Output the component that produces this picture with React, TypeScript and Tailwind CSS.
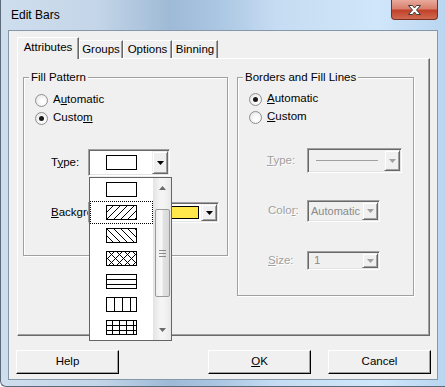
import type { ReactNode } from 'react';

type Pattern = 'empty' | 'fwd' | 'back' | 'cross' | 'hlines' | 'vlines' | 'grid';

function PatternSwatch({ kind }: { kind: Pattern }) {
  const w = 30;
  const h = 14;
  const lines: ReactNode[] = [];
  if (kind === 'fwd' || kind === 'cross') {
    for (let x = -14; x < w + 14; x += kind === 'cross' ? 8 : 7) {
      lines.push(<line key={'f' + x} x1={x} y1={h} x2={x + h} y2={0} stroke="#000" strokeWidth={1} />);
    }
  }
  if (kind === 'back' || kind === 'cross') {
    for (let x = -14; x < w + 14; x += kind === 'cross' ? 8 : 7) {
      lines.push(<line key={'b' + x} x1={x} y1={0} x2={x + h} y2={h} stroke="#000" strokeWidth={1} />);
    }
  }
  if (kind === 'hlines' || kind === 'grid') {
    [4.5, 9.5].forEach((y) => lines.push(<line key={'h' + y} x1={0} y1={y} x2={w} y2={y} stroke="#000" />));
  }
  if (kind === 'vlines') {
    [7.5, 15.5, 23.5].forEach((x) => lines.push(<line key={'v' + x} x1={x} y1={0} x2={x} y2={h} stroke="#000" />));
  }
  if (kind === 'grid') {
    [5.5, 12.5, 19.5, 26.5].forEach((x) => lines.push(<line key={'g' + x} x1={x} y1={0} x2={x} y2={h} stroke="#000" />));
  }
  return (
    <svg width={w + 1} height={h + 1} viewBox={`-0.5 -0.5 ${w + 1} ${h + 1}`}>
      <defs>
        <clipPath id={'clip-' + kind}>
          <rect x={0} y={0} width={w} height={h} />
        </clipPath>
      </defs>
      <rect x={0} y={0} width={w} height={h} fill="#fff" />
      <g clipPath={`url(#clip-${kind})`} shapeRendering={kind === 'fwd' || kind === 'back' || kind === 'cross' ? 'auto' : 'crispEdges'}>
        {lines}
      </g>
      <rect x={0} y={0} width={w} height={h} fill="none" stroke="#000" shapeRendering="crispEdges" />
    </svg>
  );
}

function Radio({ checked, children }: { checked?: boolean; children: ReactNode }) {
  return (
    <div className="flex items-center h-[18px] gap-[5px]">
      <span className="w-[13px] h-[13px] rounded-full border border-[#8e8f8f] bg-[radial-gradient(circle_at_60%_60%,#ffffff_20%,#e6e6e6_80%)] flex items-center justify-center">
        {checked && <span className="w-[5px] h-[5px] rounded-full bg-[#1b1b1b]" />}
      </span>
      <span>{children}</span>
    </div>
  );
}

function Arrow({ disabled }: { disabled?: boolean }) {
  return (
    <svg width="7" height="4" viewBox="0 0 7 4">
      <path d="M0 0h7L3.5 4z" fill={disabled ? '#a0a0a0' : '#000'} />
    </svg>
  );
}

function DropButton({ disabled }: { disabled?: boolean }) {
  return (
    <div className="w-[16px] h-full flex items-center justify-center bg-[#f0f0f0] border border-t-[#f0f0f0] border-l-[#f0f0f0] border-r-[#696969] border-b-[#696969] shadow-[inset_1px_1px_0_#fff,inset_-1px_-1px_0_#a0a0a0]">
      <Arrow disabled={disabled} />
    </div>
  );
}

function Combo({ className, disabled, children }: { className: string; disabled?: boolean; children?: ReactNode }) {
  return (
    <div
      className={`flex border border-t-[#a0a0a0] border-l-[#a0a0a0] border-r-white border-b-white shadow-[inset_1px_1px_0_#696969,inset_-1px_-1px_0_#e3e3e3] p-[1px] ${
        disabled ? 'bg-[#f0f0f0]' : 'bg-white'
      } ${className}`}
    >
      <div className="flex-1 flex items-center min-w-0 overflow-hidden whitespace-nowrap">{children}</div>
      <DropButton disabled={disabled} />
    </div>
  );
}

function Button({ children, className }: { children: ReactNode; className?: string }) {
  return (
    <div
      className={`h-[24px] flex items-center justify-center bg-[#f0f0f0] border border-t-white border-l-white border-r-[#000] border-b-[#000] shadow-[inset_-1px_-1px_0_#a0a0a0] ${className ?? ''}`}
    >
      {children}
    </div>
  );
}

export default function App() {
  const tabs = [
    { label: 'Groups', w: 'w-[44px]' },
    { label: 'Options', w: 'w-[49px]' },
    { label: 'Binning', w: 'w-[46px]' },
  ];
  const patterns: Pattern[] = ['empty', 'fwd', 'back', 'cross', 'hlines', 'vlines', 'grid'];

  return (
    <div className="relative w-[445px] h-[387px] overflow-hidden font-['Liberation_Sans',Arial,sans-serif] text-[11px] text-black bg-[linear-gradient(90deg,#cfdeed_0%,#c3d5e8_22%,#9fbad6_38%,#a9c5e1_48%,#c6dcf2_62%,#d0e6fa_85%,#b9d6f0_100%)] border-l border-b border-[#5b6a7a] rounded-bl-[6px] flex flex-col">
      {/* title bar */}
      <div className="h-[30px] flex items-center pl-[10px] pb-[1px] text-[12px]">Edit Bars</div>
      <div className="absolute right-[7px] top-0 w-[47px] h-[20px] rounded-b-[4px] border border-t-0 border-[#7a2f22] bg-[linear-gradient(180deg,#e9aa9c_0%,#d8806c_45%,#c1412a_55%,#cf6a50_100%)] flex items-center justify-center">
        <svg width="15" height="12" viewBox="0 0 15 12">
          <path d="M1.5 1.5h4l2 2.5 2-2.5h4l-4 4.5 4 4.5h-4l-2-2.5-2 2.5h-4l4-4.5z" fill="#fff" stroke="#3b3b3b" strokeWidth="1" strokeLinejoin="round" />
        </svg>
      </div>

      {/* client area */}
      <div className="ml-[7px] mr-[7px] h-[350px] border border-[#8597ab] bg-[#f0f0f0] flex flex-col">
        <div className="ml-[8px] mt-[6px] w-[413px]">
          {/* tabs */}
          <div className="flex items-end h-[21px] text-[11.5px]">
            <div className="relative z-10 w-[62px] h-[22px] -mb-px bg-[#f0f0f0] border border-b-0 border-t-white border-l-white border-r-[#696969] shadow-[inset_-1px_0_0_#a0a0a0] flex items-center justify-center pb-[2px]">
              Attributes
            </div>
            {tabs.map((t) => (
              <div
                key={t.label}
                className={`${t.w} h-[18px] border border-b-0 border-t-white border-l-white border-r-[#696969] shadow-[inset_-1px_0_0_#a0a0a0] flex items-center justify-center`}
              >
                {t.label}
              </div>
            ))}
          </div>
          {/* panel */}
          <div className="h-[278px] border border-t-white border-l-white border-r-[#696969] border-b-[#696969] shadow-[inset_-1px_-1px_0_#a0a0a0] flex items-start text-[11.5px]">
            {/* Fill Pattern */}
            <div className="relative ml-[5px] mt-[18px] w-[205px] h-[179px] border border-[#a0a0a0] shadow-[inset_1px_1px_0_#fff,1px_1px_0_#fff]">
              <span className="absolute -top-[8px] left-[5px] px-[2px] bg-[#f0f0f0] leading-[14px]">Fill Pattern</span>
              <div className="pl-[11px] pt-[13px]">
                <Radio>
                  A<span className="underline">u</span>tomatic
                </Radio>
                <Radio checked>
                  Custo<span className="underline">m</span>
                </Radio>
              </div>
              <div className="flex items-center mt-[22px] pl-[27px]">
                <span className="w-[37px]">
                  T<span className="underline">y</span>pe:
                </span>
                <Combo className="w-[82px] h-[27px]">
                  <div className="flex-1 flex justify-center">
                    <PatternSwatch kind="empty" />
                  </div>
                </Combo>
              </div>
              <div className="flex items-center mt-[26px] pl-[27px]">
                <span className="w-[37px] whitespace-nowrap">
                  <span className="underline">B</span>ackground
                </span>
                <Combo className="w-[131px] h-[21px]">
                  <div className="ml-[2px] mr-[2px] flex-1 h-[13px] bg-[#ffe84b] border border-[#000]" />
                </Combo>
              </div>
            </div>

            {/* Borders and Fill Lines */}
            <div className="relative ml-[9px] mt-[18px] w-[177px] h-[219px] border border-[#a0a0a0] shadow-[inset_1px_1px_0_#fff,1px_1px_0_#fff]">
              <span className="absolute -top-[8px] left-[5px] px-[2px] bg-[#f0f0f0] leading-[14px]">Borders and Fill Lines</span>
              <div className="pl-[11px] pt-[12px]">
                <Radio checked>
                  <span className="underline">A</span>utomatic
                </Radio>
                <Radio>
                  <span className="underline">C</span>ustom
                </Radio>
              </div>
              <div className="flex items-center mt-[22px] pl-[29px] text-[#a0a0a0] [text-shadow:1px_1px_0_#fff]">
                <span className="w-[40px]">
                  <span className="underline">T</span>ype:
                </span>
                <Combo disabled className="w-[95px] h-[25px]">
                  <div className="ml-[7px] w-[62px] h-px bg-[#a0a0a0]" />
                </Combo>
              </div>
              <div className="flex items-center mt-[27px] pl-[30px] text-[#a0a0a0] [text-shadow:1px_1px_0_#fff]">
                <span className="w-[39px]">
                  Colo<span className="underline">r</span>:
                </span>
                <Combo disabled className="w-[73px] h-[22px]">
                  <span className="pl-[2px] text-[11px] text-[#8a8a8a] [text-shadow:none]">Automatic</span>
                </Combo>
              </div>
              <div className="flex items-center mt-[29px] pl-[30px] text-[#a0a0a0] [text-shadow:1px_1px_0_#fff]">
                <span className="w-[39px]">
                  <span className="underline">S</span>ize:
                </span>
                <Combo disabled className="w-[73px] h-[19px]">
                  <span className="pl-[5px] text-[#8a8a8a] [text-shadow:none]">1</span>
                </Combo>
              </div>
            </div>
          </div>
        </div>

        {/* buttons */}
        <div className="flex mt-[14px] ml-[7px] text-[11.5px]">
          <Button className="w-[103px]">Help</Button>
          <Button className="w-[103px] ml-[89px]">
            <span className="underline">O</span>K
          </Button>
          <Button className="w-[103px] ml-[17px]">Cancel</Button>
        </div>
      </div>

      {/* open dropdown list */}
      <div className="absolute left-[88px] top-[177px] w-[83px] h-[164px] bg-white border border-[#646464] flex">
        <div className="w-[63px] flex flex-col">
          {patterns.map((p, i) => (
            <div
              key={p}
              className={`h-[23px] flex items-center justify-center ${i === 1 ? 'border border-dotted border-[#000]' : ''}`}
            >
              <PatternSwatch kind={p} />
            </div>
          ))}
        </div>
        <div className="w-[18px] flex flex-col items-center bg-[linear-gradient(90deg,#e3e3e3,#f4f4f4_40%,#f4f4f4_60%,#e8e8e8)]">
          <div className="h-[20px] flex items-center justify-center">
            <svg width="7" height="4" viewBox="0 0 7 4">
              <path d="M0 4h7L3.5 0z" fill="#6a6a6a" />
            </svg>
          </div>
          <div className="mt-[11px] w-[15px] h-[88px] rounded-[2px] border border-[#9a9a9a] bg-[linear-gradient(90deg,#eeeeee,#f9f9f9_45%,#e2e2e2_55%,#d9d9d9)] flex flex-col items-center justify-center gap-[2px]">
            <div className="w-[7px] h-px bg-[#8a8a8a]" />
            <div className="w-[7px] h-px bg-[#8a8a8a]" />
            <div className="w-[7px] h-px bg-[#8a8a8a]" />
          </div>
          <div className="flex-1" />
          <div className="h-[20px] flex items-center justify-center">
            <svg width="7" height="4" viewBox="0 0 7 4">
              <path d="M0 0h7L3.5 4z" fill="#6a6a6a" />
            </svg>
          </div>
        </div>
      </div>
    </div>
  );
}
